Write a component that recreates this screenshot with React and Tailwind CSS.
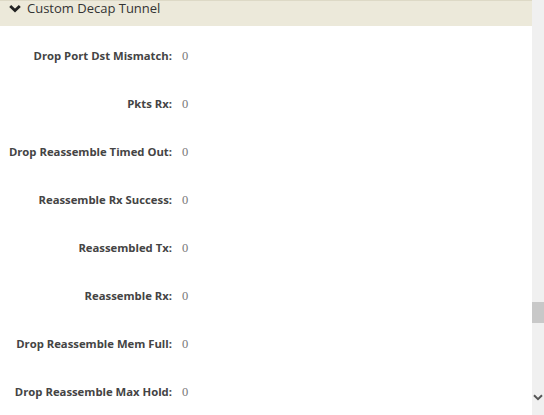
const rows = [
  "Drop Port Dst Mismatch",
  "Pkts Rx",
  "Drop Reassemble Timed Out",
  "Reassemble Rx Success",
  "Reassembled Tx",
  "Reassemble Rx",
  "Drop Reassemble Mem Full",
  "Drop Reassemble Max Hold",
];

const ChevronDown = ({ className, width = 2.4 }) => (
  <svg viewBox="0 0 12 8" className={className} fill="none" stroke="currentColor" strokeWidth={width}>
    <polyline points="1.2,1.4 6,6 10.8,1.4" />
  </svg>
);

export default function App() {
  return (
    <div className="flex h-[415px] w-[544px] overflow-hidden bg-white font-['Open_Sans',sans-serif]">
      {/* ================= CONTENT ================= */}
      <div className="flex-1">
        <div className="flex h-[26px] items-start border-t border-[#ddd9c6] bg-[#ece9da] pl-[9px] text-[13px] leading-[15px] text-[#333]">
          <ChevronDown className="mt-[3px] mr-[6px] h-[9px] w-[12px] text-[#222]" width={2.8} />
          <span>Custom Decap Tunnel</span>
        </div>

        <div className="pt-[6px]">
          {rows.map((label) => (
            <div key={label} className="flex h-[48px] items-center">
              <div className="w-[172px] text-right text-[11.3px] font-bold text-[#444]">
                {label}:
              </div>
              <div className="pl-[10px] font-['Liberation_Serif',serif] text-[12.5px] text-[#777]">
                0
              </div>
            </div>
          ))}
        </div>
      </div>

      {/* ================= SCROLLBAR ================= */}
      <div className="flex w-[12px] flex-col bg-[#f0f0f0]">
        <div className="h-[302px]" />
        <div className="h-[21px] bg-[#c8c8c8]" />
        <div className="flex-1" />
        <div className="flex h-[24px] items-start justify-center pt-[3px]">
          <ChevronDown className="h-[7px] w-[10px] text-[#555]" />
        </div>
      </div>
    </div>
  );
}
